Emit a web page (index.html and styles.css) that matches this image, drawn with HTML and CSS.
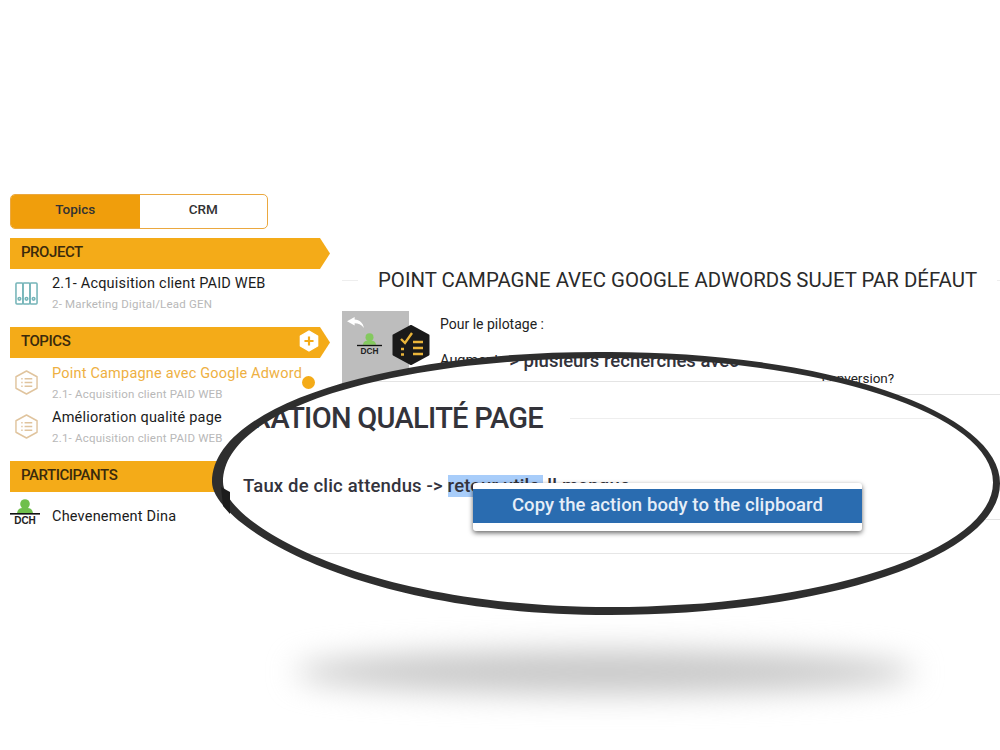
FILE: index.html

```html
<!DOCTYPE html>
<html lang="fr">
<head>
  <meta charset="UTF-8">
  <meta name="viewport" content="width=device-width, initial-scale=1.0">
  <title>Point campagne</title>
  <link rel="stylesheet" href="styles.css">
</head>
<body>
  <div class="page">
    <aside class="sidebar">
      <div class="tabs">
        <div class="tab tab-active">Topics</div>
        <div class="tab">CRM</div>
      </div>

      <div class="section-head">PROJECT</div>
      <div class="item item-project">
        <svg class="item-icon" viewBox="0 0 24 24" fill="none" stroke="#74b4b8" stroke-width="1.6">
          <rect x="1" y="1" width="7.3" height="22" rx="1"/>
          <rect x="8.3" y="1" width="7.3" height="22" rx="1"/>
          <rect x="15.7" y="1" width="7.3" height="22" rx="1"/>
          <circle cx="4.6" cy="17.5" r="1.4"/>
          <circle cx="12" cy="17.5" r="1.4"/>
          <circle cx="19.4" cy="17.5" r="1.4"/>
        </svg>
        <div>
          <div class="item-title">2.1- Acquisition client PAID WEB</div>
          <div class="item-sub">2- Marketing Digital/Lead GEN</div>
        </div>
      </div>

      <div class="section-head section-topics">
        TOPICS
        <svg class="add-icon" viewBox="0 0 22 24">
          <path d="M11 1 L20.5 6.5 V17.5 L11 23 L1.5 17.5 V6.5 Z" fill="#fff" stroke="#fff" stroke-linejoin="round" stroke-width="1.5"/>
          <path d="M11 7 V17 M6 12 H16" stroke="#f4ab18" stroke-width="2.4"/>
        </svg>
      </div>
      <div class="item item-topic">
        <svg class="item-icon" viewBox="0 0 24 26" fill="none" stroke="#e0c49e" stroke-width="1.5">
          <path d="M12 1 L23 7 V19 L12 25 L1 19 V7 Z" stroke-linejoin="round"/>
          <path d="M10 9 H18 M10 13 H18 M10 17 H18 M6.5 9 H8 M6.5 13 H8 M6.5 17 H8"/>
        </svg>
        <div>
          <div class="item-title item-title-active">Point Campagne avec Google Adword</div>
          <div class="item-sub">2.1- Acquisition client PAID WEB</div>
        </div>
        <span class="dot"></span>
      </div>
      <div class="item item-topic">
        <svg class="item-icon" viewBox="0 0 24 26" fill="none" stroke="#e0c49e" stroke-width="1.5">
          <path d="M12 1 L23 7 V19 L12 25 L1 19 V7 Z" stroke-linejoin="round"/>
          <path d="M10 9 H18 M10 13 H18 M10 17 H18 M6.5 9 H8 M6.5 13 H8 M6.5 17 H8"/>
        </svg>
        <div>
          <div class="item-title">Amélioration qualité page</div>
          <div class="item-sub">2.1- Acquisition client PAID WEB</div>
        </div>
      </div>

      <div class="section-head section-participants">PARTICIPANTS</div>
      <div class="participant">
        <svg class="avatar" viewBox="0 0 30 26">
          <circle cx="15" cy="5" r="4.8" fill="#6fbf4b"/>
          <path d="M7 14 Q8 9 12 9 H18 Q22 9 23 14 Z" fill="#6fbf4b"/>
          <rect y="14" width="30" height="1.6" fill="#111"/>
          <text x="15" y="25" text-anchor="middle" class="avatar-text">DCH</text>
        </svg>
        <span class="item-title">Chevenement Dina</span>
      </div>
    </aside>

    <main class="content">
      <div class="topic-head">
        <span class="rule rule-short"></span>
        <h1>POINT CAMPAGNE AVEC GOOGLE ADWORDS SUJET PAR DÉFAUT</h1>
        <span class="rule"></span>
      </div>

      <div class="action">
        <div class="action-side">
          <svg class="reply-icon" viewBox="0 0 20 13">
            <path d="M9 0 L0 5 L9 10 V7.5 C13 7.5 17 9 20 13 C19 7 15 3.5 9 3 Z" fill="#fff"/>
          </svg>
          <svg class="avatar" viewBox="0 0 30 26">
            <circle cx="15" cy="5" r="4.8" fill="#84c95f"/>
            <path d="M7 14 Q8 9 12 9 H18 Q22 9 23 14 Z" fill="#84c95f"/>
            <rect y="14" width="30" height="1.6" fill="#111"/>
            <text x="15" y="25" text-anchor="middle" class="avatar-text">DCH</text>
          </svg>
        </div>
        <svg class="action-badge" viewBox="0 0 38 40">
          <path d="M19 1 L36.5 10.5 V29.5 L19 39 L1.5 29.5 V10.5 Z" fill="#1a1a1a" stroke="#1a1a1a" stroke-width="2" stroke-linejoin="round"/>
          <path d="M9 14 L13 18 L20 8" fill="none" stroke="#eab53a" stroke-width="2.4"/>
          <path d="M21 17 H31 M21 23 H31 M21 29 H31 M9 24 H12 M9 29.5 H12" stroke="#eab53a" stroke-width="2.4"/>
        </svg>
        <div class="action-body">
          <p class="action-intro">Pour le pilotage :</p>
          <p class="action-line">Augmente</p>
          <p class="action-end">conversion?</p>
        </div>
      </div>
      <div class="action-rule"></div>
      <div class="action-rule action-rule-low"></div>
    </main>
  </div>

  <div class="floor-shadow"></div>

  <div class="lens">
    <p class="lens-prev">-&gt; plusieurs recherches avec</p>
    <div class="lens-top"></div>
    <div class="lens-head">
      <h2>RATION QUALITÉ PAGE</h2>
      <span class="rule"></span>
    </div>
    <p class="lens-text">Taux de clic attendus -&gt; <span class="selected">retour utile</span> ll manque</p>
    <div class="context-menu">
      <div class="context-item">Copy the action body to the clipboard</div>
    </div>
    <div class="lens-rule"></div>
  </div>

  <svg class="lens-ring" viewBox="0 0 1000 750">
    <path fill-rule="evenodd" fill="#2e2e2e" d="M610 352 C390 350 212 405 212 482 C212 522 350 615 610 615 A390 131.5 0 0 0 1000 483.5 A390 131.5 0 0 0 610 352 Z M610 358 C395 358 223 408 223 482 C223 520 355 607 610 607 A383 124.5 0 0 0 993 482.5 A383 124.5 0 0 0 610 358 Z"/>
    <path d="M221 487 L230 492 V514 L223 506 Z" fill="#1c1c1c"/>
  </svg>
</body>
</html>
```

FILE: styles.css

```css
* {
  box-sizing: border-box;
}
html, body {
  margin: 0;
  padding: 0;
}
body {
  position: relative;
  width: 1000px;
  height: 750px;
  overflow: hidden;
  background-color: #fff;
  font-family: Roboto, "Liberation Sans", sans-serif;
  color: #222;
}
p, h1, h2 {
  margin: 0;
  font-weight: 400;
}
.page {
  display: flex;
  padding: 194px 0 0 10px;
}

/* sidebar */
.sidebar {
  width: 320px;
  flex-shrink: 0;
}
.tabs {
  display: flex;
  width: 258px;
  height: 35px;
  border: 1px solid #eba83f;
  border-radius: 5px;
  overflow: hidden;
  margin-bottom: 9px;
}
.tab {
  width: 128px;
  display: flex;
  align-items: center;
  justify-content: center;
  padding-bottom: 5px;
  font-size: 13.5px;
  font-weight: 500;
  color: #333;
}
.tab-active {
  width: 129px;
  background-color: #f09e0c;
}
.section-head {
  display: flex;
  align-items: center;
  justify-content: space-between;
  height: 31px;
  padding: 0 11px 3px;
  background-color: #f4ab18;
  clip-path: polygon(0 0, 310px 0, 320px 50%, 310px 100%, 0 100%);
  font-size: 15px;
  font-weight: 500;
  letter-spacing: -0.45px;
  color: #3a2a0c;
}
.add-icon {
  width: 20px;
  height: 22px;
}
.item {
  display: flex;
  align-items: center;
  gap: 14px;
  padding-left: 5px;
}
.item-project {
  height: 58px;
  padding-bottom: 10px;
}
.item-topic {
  height: 44px;
  padding-bottom: 1px;
  position: relative;
}
.section-topics + .item-topic {
  margin-top: 3px;
}
.item-icon {
  width: 23px;
  height: 25px;
  flex-shrink: 0;
}
.item-title {
  font-size: 14.5px;
  line-height: 19px;
  color: #1b1b1b;
  letter-spacing: 0.2px;
}
.item-title-active {
  color: #eeb042;
}
.item-sub {
  margin-top: 4px;
  font-size: 11.5px;
  line-height: 15px;
  color: #b8b8b8;
  letter-spacing: 0.2px;
}
.dot {
  position: absolute;
  left: 292px;
  top: 15px;
  width: 13px;
  height: 13px;
  border-radius: 50%;
  background-color: #f4ab18;
}
.section-participants {
  margin-top: 12px;
}
.participant {
  display: flex;
  align-items: center;
  gap: 12px;
  height: 48px;
}
.participant .avatar {
  margin-top: -8px;
}
.avatar {
  width: 30px;
  height: 26px;
  flex-shrink: 0;
}
.avatar-text {
  font-family: "Liberation Sans", sans-serif;
  font-size: 10px;
  font-weight: 700;
  fill: #222;
}

/* main column */
.content {
  flex: 1;
  margin-left: 12px;
}
.topic-head {
  display: flex;
  align-items: center;
  gap: 20px;
  height: 24px;
  margin-top: 74px;
}
.topic-head h1 {
  font-size: 20.4px;
  white-space: nowrap;
  color: #2a2a2a;
}
.rule {
  flex: 1;
  height: 1px;
  background-color: #eee;
}
.rule-short {
  flex: 0 0 16px;
}
.action {
  display: flex;
  margin-top: 19px;
}
.action-side {
  display: flex;
  flex-direction: column;
  width: 67px;
  height: 74px;
  padding: 6px 0 0 5px;
  background-color: #bdbdbd;
}
.action-side .avatar {
  width: 25px;
  height: 22px;
  margin: 5px 0 0 10px;
}
.reply-icon {
  width: 17px;
  height: 11px;
}
.action-badge {
  width: 38px;
  height: 40px;
  margin: 14px 0 0 -17px;
}
.action-body {
  margin-left: 10px;
  padding-top: 5px;
  font-size: 14px;
}
.action-line {
  margin-top: 20px;
  font-size: 14.5px;
  white-space: nowrap;
}
.action-end {
  margin: 1px 0 0 382px;
  font-size: 13.5px;
}
.action-rule {
  height: 1px;
  margin: 8px 0 0 500px;
  background-color: #e4e4e4;
}
.action-rule-low {
  margin-top: 124px;
}

/* shadow under the lens */
.floor-shadow {
  position: absolute;
  left: 295px;
  top: 650px;
  width: 620px;
  height: 44px;
  border-radius: 50%;
  background-color: #c8c8c8;
  filter: blur(15px);
}

/* magnifier */
.lens {
  position: absolute;
  left: 212px;
  top: 352px;
  width: 788px;
  height: 263px;
  background-color: #fff;
  clip-path: path("M398 3 A387 128 0 0 1 588 19.5 V29 H630 A387 128 0 0 1 785 131 A387 128 0 0 1 398 259 C140 259 5 169 5 130 C5 54 180 3 398 3 Z");
}
.lens-prev {
  margin: -2px 0 0 291px;
  font-size: 18.5px;
  line-height: 22px;
  font-weight: 500;
  white-space: nowrap;
  color: #33333c;
}
.lens-top {
  height: 1px;
  margin-top: 9px;
  background-color: #e4e4e4;
}
.lens-head {
  display: flex;
  align-items: center;
  height: 34px;
  margin-top: 19px;
}
.lens-head h2 {
  display: flex;
  justify-content: flex-end;
  width: 331px;
  margin-right: 27px;
  font-size: 29px;
  font-weight: 500;
  letter-spacing: -0.7px;
  white-space: nowrap;
  color: #33333a;
}
.lens-text {
  margin: 40px 0 0 31px;
  font-size: 18.5px;
  line-height: 22px;
  font-weight: 500;
  letter-spacing: 0.17px;
  white-space: nowrap;
  color: #33333c;
}
.selected {
  padding-right: 3px;
  background-color: #a8cdfa;
}
.lens-rule {
  height: 1px;
  margin: 56px 0 0 78px;
  background-color: #e6e6e6;
}
.context-menu {
  position: absolute;
  left: 261px;
  top: 131px;
  width: 389px;
  padding: 6px 0 8px;
  background-color: #fff;
  border-radius: 3px;
  box-shadow: 0 2px 5px rgba(0,0,0,0.6);
}
.context-item {
  height: 34px;
  line-height: 33px;
  text-align: center;
  font-size: 18.5px;
  font-weight: 500;
  letter-spacing: 0.1px;
  color: #e6eef8;
  background-color: #2a6cb0;
}
.lens-ring {
  position: absolute;
  left: 0;
  top: 0;
  width: 1000px;
  height: 750px;
  pointer-events: none;
}
```
